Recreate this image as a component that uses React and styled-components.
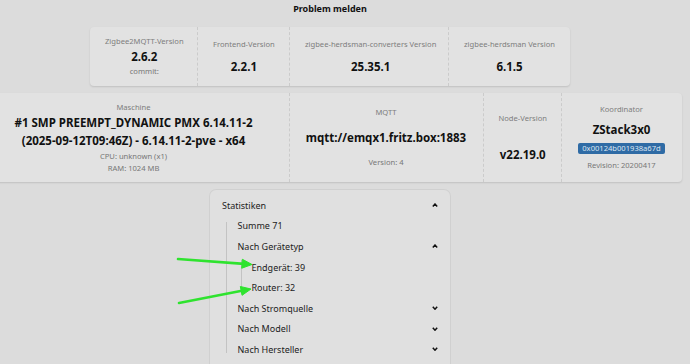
import styled, { createGlobalStyle } from "styled-components";

const GlobalStyle = createGlobalStyle`
html, body {
    margin: 0;
    background: #dcdcdc;
    overflow: hidden;
}
body {
    font-family: "Noto Sans", "Open Sans", sans-serif;
}
`

const Page = styled.div`
position: relative;
width: 660px;
height: 364px;
display: flex;
flex-direction: column;
align-items: center;
`
const ReportLink = styled.div`
height: 17px;
line-height: 17px;
font-size: 9px;
font-weight: 700;
color: #111;
margin-bottom: 10px;
`
const StatsCard = styled.div`
flex-shrink: 0;
display: grid;
grid-template-columns: ${p => p.$cols};
background: #e2e2e2;
border-radius: 4px;
box-shadow: 0 1px 2px rgba(0,0,0,.13);
margin-bottom: ${p => p.$mb}px;
`
const Stat = styled.div`
display: grid;
align-items: center;
justify-items: center;
padding: 8px 15px;
text-align: center;
border-right: 1px dashed rgba(0,0,0,.1);
&:last-child {
    border-right: none;
}
`
const StatTitle = styled.div`
font-size: 7.6px;
line-height: 13px;
color: #7d7d7d;
white-space: nowrap;
`
const StatValue = styled.div`
font-size: 11.5px;
font-weight: 700;
line-height: ${p => p.$lh || 17}px;
color: #111;
white-space: nowrap;
`
const StatDesc = styled.div`
font-size: 7.6px;
line-height: ${p => p.$lh || 13}px;
color: #777;
white-space: nowrap;
`
const Badge = styled.div`
background: #2f6ba5;
color: #dbe6f2;
font-size: 7.6px;
line-height: 11px;
height: 11px;
padding: 0 4px;
border-radius: 2px;
`
const Panel = styled.div`
flex: 1;
width: 240px;
box-sizing: border-box;
padding: 5px 12px 0;
background: #e0e0e0;
border-radius: 6px 6px 0 0;
box-shadow: 0 0 0 1px rgba(0,0,0,.05);
`
const Row = styled.div`
display: flex;
justify-content: space-between;
align-items: center;
height: 20.6px;
font-size: 9px;
color: #222;
white-space: nowrap;
`
const Tree = styled.div`
position: relative;
margin-left: ${p => p.$ml}px;
padding-left: ${p => p.$pl}px;
&::before {
    content: "";
    position: absolute;
    left: 0;
    top: ${p => p.$top}px;
    bottom: ${p => p.$bottom}px;
    border-left: 1px solid #c3c3c3;
}
`
const Overlay = styled.svg`
position: absolute;
left: 0;
top: 0;
pointer-events: none;
`

function Chevron({ up }) {
    return (
        <svg width="6" height="4" viewBox="0 0 6 4">
            <polyline
                points={up ? "0.8,3.4 3,1 5.2,3.4" : "0.8,0.8 3,3.2 5.2,0.8"}
                fill="none" stroke="#111" strokeWidth="1.5" />
        </svg>
    )
}

function Arrow({ x1, y1, x2, y2 }) {
    const a = Math.atan2(y2 - y1, x2 - x1);
    const len = 10, half = 4.5;
    const bx = x2 - len * Math.cos(a), by = y2 - len * Math.sin(a);
    const px = -Math.sin(a) * half, py = Math.cos(a) * half;
    const head = `${x2},${y2} ${bx + px},${by + py} ${bx - px},${by - py}`;
    return (
        <g>
            <line x1={x1} y1={y1} x2={bx + 2 * Math.cos(a)} y2={by + 2 * Math.sin(a)}
                stroke="#2fe32f" strokeWidth="2.6" strokeLinecap="round" />
            <polygon points={head} fill="#2fe32f" stroke="#2fe32f" strokeWidth="1" strokeLinejoin="round" />
        </g>
    )
}

export default function App() {
    return (
        <>
            <GlobalStyle />
            <Page>
                <ReportLink>Problem melden</ReportLink>
                <StatsCard $cols="108px 92px 159px 121px" $mb={7}>
                    <Stat>
                        <StatTitle>Zigbee2MQTT-Version</StatTitle>
                        <StatValue>2.6.2</StatValue>
                        <StatDesc>commit:</StatDesc>
                    </Stat>
                    <Stat>
                        <StatTitle>Frontend-Version</StatTitle>
                        <StatValue>2.2.1</StatValue>
                    </Stat>
                    <Stat>
                        <StatTitle>zigbee-herdsman-converters Version</StatTitle>
                        <StatValue>25.35.1</StatValue>
                    </Stat>
                    <Stat>
                        <StatTitle>zigbee-herdsman Version</StatTitle>
                        <StatValue>6.1.5</StatValue>
                    </Stat>
                </StatsCard>
                <StatsCard $cols="311px 194px 78px 120px" $mb={8}>
                    <Stat>
                        <StatTitle>Maschine</StatTitle>
                        <StatValue $lh={18}>#1 SMP PREEMPT_DYNAMIC PMX 6.14.11-2<br />(2025-09-12T09:46Z) - 6.14.11-2-pve - x64</StatValue>
                        <StatDesc $lh={12}>CPU: unknown (x1)</StatDesc>
                        <StatDesc $lh={12}>RAM: 1024 MB</StatDesc>
                    </Stat>
                    <Stat>
                        <StatTitle>MQTT</StatTitle>
                        <StatValue>mqtt://emqx1.fritz.box:1883</StatValue>
                        <StatDesc>Version: 4</StatDesc>
                    </Stat>
                    <Stat>
                        <StatTitle>Node-Version</StatTitle>
                        <StatValue>v22.19.0</StatValue>
                    </Stat>
                    <Stat>
                        <StatTitle>Koordinator</StatTitle>
                        <StatValue>ZStack3x0</StatValue>
                        <Badge>0x00124b001938a67d</Badge>
                        <StatDesc>Revision: 20200417</StatDesc>
                    </Stat>
                </StatsCard>
                <Panel>
                    <Row><span>Statistiken</span><Chevron up /></Row>
                    <Tree $ml={3.5} $pl={12} $top={6} $bottom={7}>
                        <Row><span>Summe 71</span></Row>
                        <Row><span>Nach Gerätetyp</span><Chevron up /></Row>
                        <Tree $ml={3} $pl={11} $top={3} $bottom={6}>
                            <Row><span>Endgerät: 39</span></Row>
                            <Row><span>Router: 32</span></Row>
                        </Tree>
                        <Row><span>Nach Stromquelle</span><Chevron /></Row>
                        <Row><span>Nach Modell</span><Chevron /></Row>
                        <Row><span>Nach Hersteller</span><Chevron /></Row>
                    </Tree>
                </Panel>
                <Overlay width="690" height="364">
                    <Arrow x1={178} y1={259} x2={252} y2={264.5} />
                    <Arrow x1={179} y1={303} x2={251} y2={289} />
                </Overlay>
            </Page>
        </>
    )
}
